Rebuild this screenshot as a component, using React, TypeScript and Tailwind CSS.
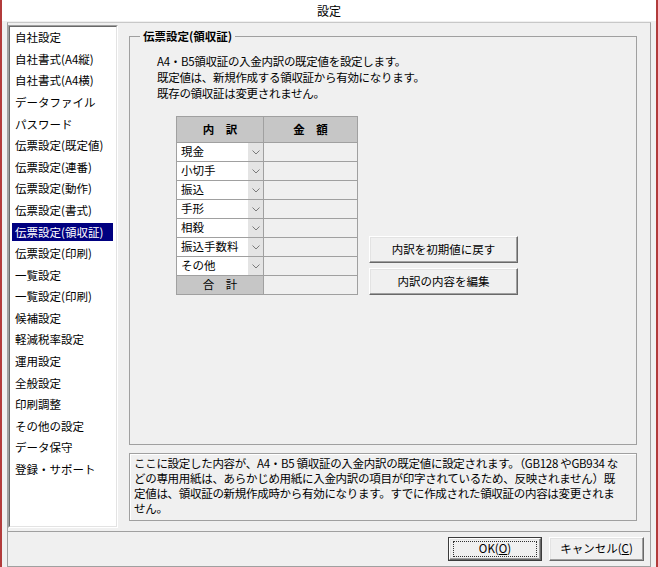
const menu = [
  "自社設定",
  "自社書式(A4縦)",
  "自社書式(A4横)",
  "データファイル",
  "パスワード",
  "伝票設定(既定値)",
  "伝票設定(連番)",
  "伝票設定(動作)",
  "伝票設定(書式)",
  "伝票設定(領収証)",
  "伝票設定(印刷)",
  "一覧設定",
  "一覧設定(印刷)",
  "候補設定",
  "軽減税率設定",
  "運用設定",
  "全般設定",
  "印刷調整",
  "その他の設定",
  "データ保守",
  "登録・サポート",
];

const rows = ["現金", "小切手", "振込", "手形", "相殺", "振込手数料", "その他"];

const Chevron = () => (
  <svg width="8" height="5" viewBox="0 0 8 5">
    <polyline points="0.5,0.5 4,4 7.5,0.5" fill="none" stroke="#7a7a7a" strokeWidth="1" />
  </svg>
);

const btn =
  "bg-[#f0f0f0] border border-t-white border-l-white border-r-[#696969] border-b-[#696969] shadow-[inset_-1px_-1px_0_#a0a0a0,inset_1px_1px_0_#e3e3e3] flex items-center justify-center";

export default function App() {
  return (
    <div className="w-[658px] h-[567px] flex flex-col bg-[#f0f0f0] border-x-2 border-[#b23b3b] text-[11.5px] text-black font-['Noto_Sans_CJK_JP','Noto_Sans',sans-serif] overflow-hidden">
      {/* title bar */}
      <div className="h-[21px] shrink-0 bg-white flex items-center justify-center text-[12px]">設定</div>

      <div className="mx-[5px] mt-[1px] flex-1 flex flex-col border border-[#a0a0a0] border-t-[#c8c8c8]">
        <div className="h-[508px] flex">
          {/* menu list */}
          <div className="mt-[2px] h-[503px] w-[110px] border border-t-[#a0a0a0] border-l-[#a0a0a0] border-r-white border-b-white">
            <div className="h-full border border-t-[#696969] border-l-[#696969] border-r-[#e3e3e3] border-b-[#e3e3e3] bg-white">
              {menu.map((m) => (
                <div key={m} className="h-[21.6px] flex items-center">
                  <span
                    className={
                      m === "伝票設定(領収証)"
                        ? "ml-[2px] w-[101px] h-[18px] pl-[3px] flex items-center whitespace-nowrap bg-[#000080] text-white"
                        : "ml-[2px] w-[101px] h-[18px] pl-[3px] flex items-center whitespace-nowrap"
                    }
                  >
                    {m}
                  </span>
                </div>
              ))}
            </div>
          </div>

          {/* right side */}
          <div className="ml-[11px] mr-[13px] flex-1 flex flex-col min-w-0">
            <fieldset className="mt-[5px] flex-1 border border-[#a0a0a0] pl-[10px] pr-[10px] min-w-0">
              <legend className="px-[3px] font-bold leading-[16px]">伝票設定(領収証)</legend>
              <div className="pl-[17px] pt-[9px]">
                <div className="leading-[16px] tracking-[-0.3px] whitespace-nowrap">
                  <p>A4・B5領収証の入金内訳の既定値を設定します。</p>
                  <p>既定値は、新規作成する領収証から有効になります。</p>
                  <p>既存の領収証は変更されません。</p>
                </div>

                <div className="mt-[15px] ml-[19px] flex items-end gap-[11px]">
                  {/* table */}
                  <div className="w-[182px] border border-[#a0a0a0] bg-[#f0f0f0] leading-none">
                    <div className="flex h-[25px] bg-[#c6c6c6] font-bold">
                      <div className="w-[86px] flex items-center justify-center">内　訳</div>
                      <div className="flex-1 border-l border-[#a0a0a0] flex items-center justify-center">金　額</div>
                    </div>
                    {rows.map((r) => (
                      <div key={r} className="flex h-[19px] border-t border-[#a0a0a0]">
                        <div className="w-[86px] flex bg-white">
                          <div className="flex-1 pl-[4px] flex items-center whitespace-nowrap">{r}</div>
                          <div className="w-[16px] border-l border-white bg-[#e4e4e4] flex items-center justify-center">
                            <Chevron />
                          </div>
                        </div>
                        <div className="flex-1 border-l border-[#a0a0a0]" />
                      </div>
                    ))}
                    <div className="flex h-[19px] border-t border-[#a0a0a0]">
                      <div className="w-[86px] bg-[#c6c6c6] flex items-center justify-center">合　計</div>
                      <div className="flex-1 border-l border-[#a0a0a0]" />
                    </div>
                  </div>

                  {/* buttons */}
                  <div className="flex flex-col gap-[5px]">
                    <button className={`${btn} w-[149px] h-[27px]`}>内訳を初期値に戻す</button>
                    <button className={`${btn} w-[149px] h-[27px]`}>内訳の内容を編集</button>
                  </div>
                </div>
              </div>
            </fieldset>

            <div className="mt-[8px] mb-[10px] h-[68px] border border-[#a0a0a0] shadow-[inset_1px_1px_0_#fff] pl-[4px] pt-[2px] leading-[15px] tracking-[-0.3px] whitespace-nowrap">
              <p>ここに設定した内容が、A4・B5 領収証の入金内訳の既定値に設定されます。（GB128 やGB934 な</p>
              <p>どの専用用紙は、あらかじめ用紙に入金内訳の項目が印字されているため、反映されません）既</p>
              <p>定値は、領収証の新規作成時から有効になります。すでに作成された領収証の内容は変更されま</p>
              <p>せん。</p>
            </div>
          </div>
        </div>

        {/* footer */}
        <div className="flex-1 border-t border-[#a0a0a0] flex justify-end items-start pt-[5px] pr-[6px] gap-[7px]">
          <button className="w-[94px] h-[24px] border border-[#3c3c3c] p-0">
            <div className={`${btn} w-full h-full`}>
              <div className="w-[84px] h-[16px] border border-dotted border-[#303030] flex items-center justify-center">
                OK(<span className="underline">O</span>)
              </div>
            </div>
          </button>
          <button className={`${btn} w-[95px] h-[24px]`}>
            キャンセル(<span className="underline">C</span>)
          </button>
        </div>
      </div>
    </div>
  );
}
